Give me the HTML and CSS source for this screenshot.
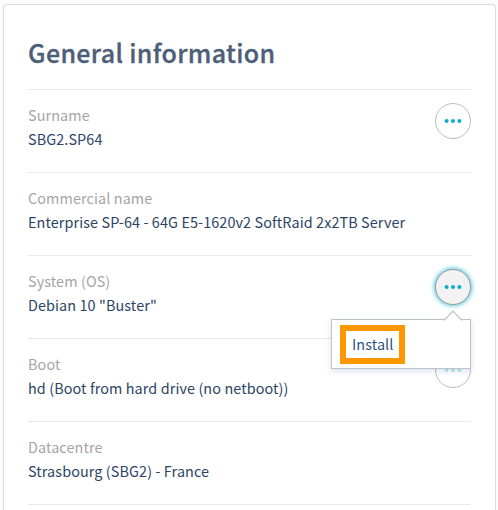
FILE: index.html
```html
<!DOCTYPE html>
<html lang="en">
<head>
<meta charset="utf-8">
<title>General information</title>
<link rel="stylesheet" href="styles.css">
</head>
<body>
<main class="card">
  <h1 class="title">General information</h1>
  <dl class="list">
    <div class="row">
      <div class="text"><dt>Surname</dt><dd>SBG2.SP64</dd></div>
      <button class="more" aria-label="Actions"><svg width="18" height="4" viewBox="0 0 18 4"><circle cx="2.6" cy="2" r="2"/><circle cx="9" cy="2" r="2"/><circle cx="15.4" cy="2" r="2"/></svg></button>
    </div>
    <div class="row">
      <div class="text"><dt>Commercial name</dt><dd>Enterprise SP-64 - 64G E5-1620v2 SoftRaid 2x2TB Server</dd></div>
    </div>
    <div class="row">
      <div class="text"><dt>System (OS)</dt><dd>Debian 10 "Buster"</dd></div>
      <button class="more active" aria-label="Actions"><svg width="18" height="4" viewBox="0 0 18 4"><circle cx="2.6" cy="2" r="2"/><circle cx="9" cy="2" r="2"/><circle cx="15.4" cy="2" r="2"/></svg></button>
      <div class="menu">
        <svg class="arrow" width="20" height="11" viewBox="0 0 20 11"><path d="M1 10.5 L10 1.2 L19 10.5" fill="#fff" stroke="#bfc1c4" stroke-width="1.2"/><path d="M2 10.5H18" stroke="#fff" stroke-width="1.4"/></svg>
        <a class="install">Install</a>
      </div>
    </div>
    <div class="row">
      <div class="text"><dt>Boot</dt><dd>hd (Boot from hard drive (no netboot))</dd></div>
      <button class="more faded" aria-label="Actions"><svg width="18" height="4" viewBox="0 0 18 4"><circle cx="2.6" cy="2" r="2"/><circle cx="9" cy="2" r="2"/><circle cx="15.4" cy="2" r="2"/></svg></button>
    </div>
    <div class="row last">
      <div class="text"><dt>Datacentre</dt><dd>Strasbourg (SBG2) - France</dd></div>
    </div>
  </dl>
</main>
</body>
</html>
```
FILE: styles.css
```css
* { box-sizing: border-box; }
html { background: #fcfcfc; }
body {
  margin: 0;
  height: 510px;
  padding: 4px 2px 0 3px;
  font-family: "Noto Sans CJK SC", "Noto Sans", sans-serif;
}
.card {
  height: 506px;
  padding: 0 24px;
  background: #fff;
  border: 1px solid #dcdde0;
  border-bottom: 0;
  border-radius: 4px 4px 0 0;
}
.title {
  margin: 0;
  height: 84px;
  padding-top: 29px;
  font-size: 25px;
  line-height: 36px;
  font-weight: 500;
  letter-spacing: .35px;
  -webkit-text-stroke: .35px #4d5f78;
  color: #4d5f78;
}
.list { margin: 0; }
.row {
  position: relative;
  display: flex;
  justify-content: space-between;
  height: 83px;
  padding-top: 13px;
  border-top: 1px solid #e9e9e9;
}
.last {
  height: 84px;
  border-bottom: 1px solid #e9e9e9;
}
.text {
  font-size: 14.4px;
  line-height: 24px;
  letter-spacing: .1px;
  white-space: nowrap;
}
dt { color: #a5a5a5; }
dd { margin: 0; color: #2b4465; }
.more {
  width: 36px;
  height: 36px;
  padding: 0;
  display: flex;
  align-items: center;
  justify-content: center;
  background: #fff;
  border: 1px solid #bcbcbc;
  border-radius: 50%;
  fill: #0cacc8;
}
.active {
  background: #f2f2f2;
  border-color: #9b9b9b;
  box-shadow: 0 0 4px 1px #4fc5dc;
}
.faded svg { opacity: .3; }
.menu {
  position: absolute;
  z-index: 2;
  top: 63px;
  right: 0;
  width: 140px;
  height: 50px;
  padding: 5px 8px;
  background: #fff;
  border: 1px solid #bfc1c4;
  box-shadow: 0 2px 6px rgba(0, 60, 160, .15);
}
.arrow {
  position: absolute;
  top: -10px;
  right: 7px;
}
.install {
  display: block;
  width: 65px;
  height: 39px;
  border: 6px solid #ff9800;
  padding-left: 6px;
  font-size: 14.4px;
  line-height: 26px;
  letter-spacing: .1px;
  color: #2b5380;
}
```
